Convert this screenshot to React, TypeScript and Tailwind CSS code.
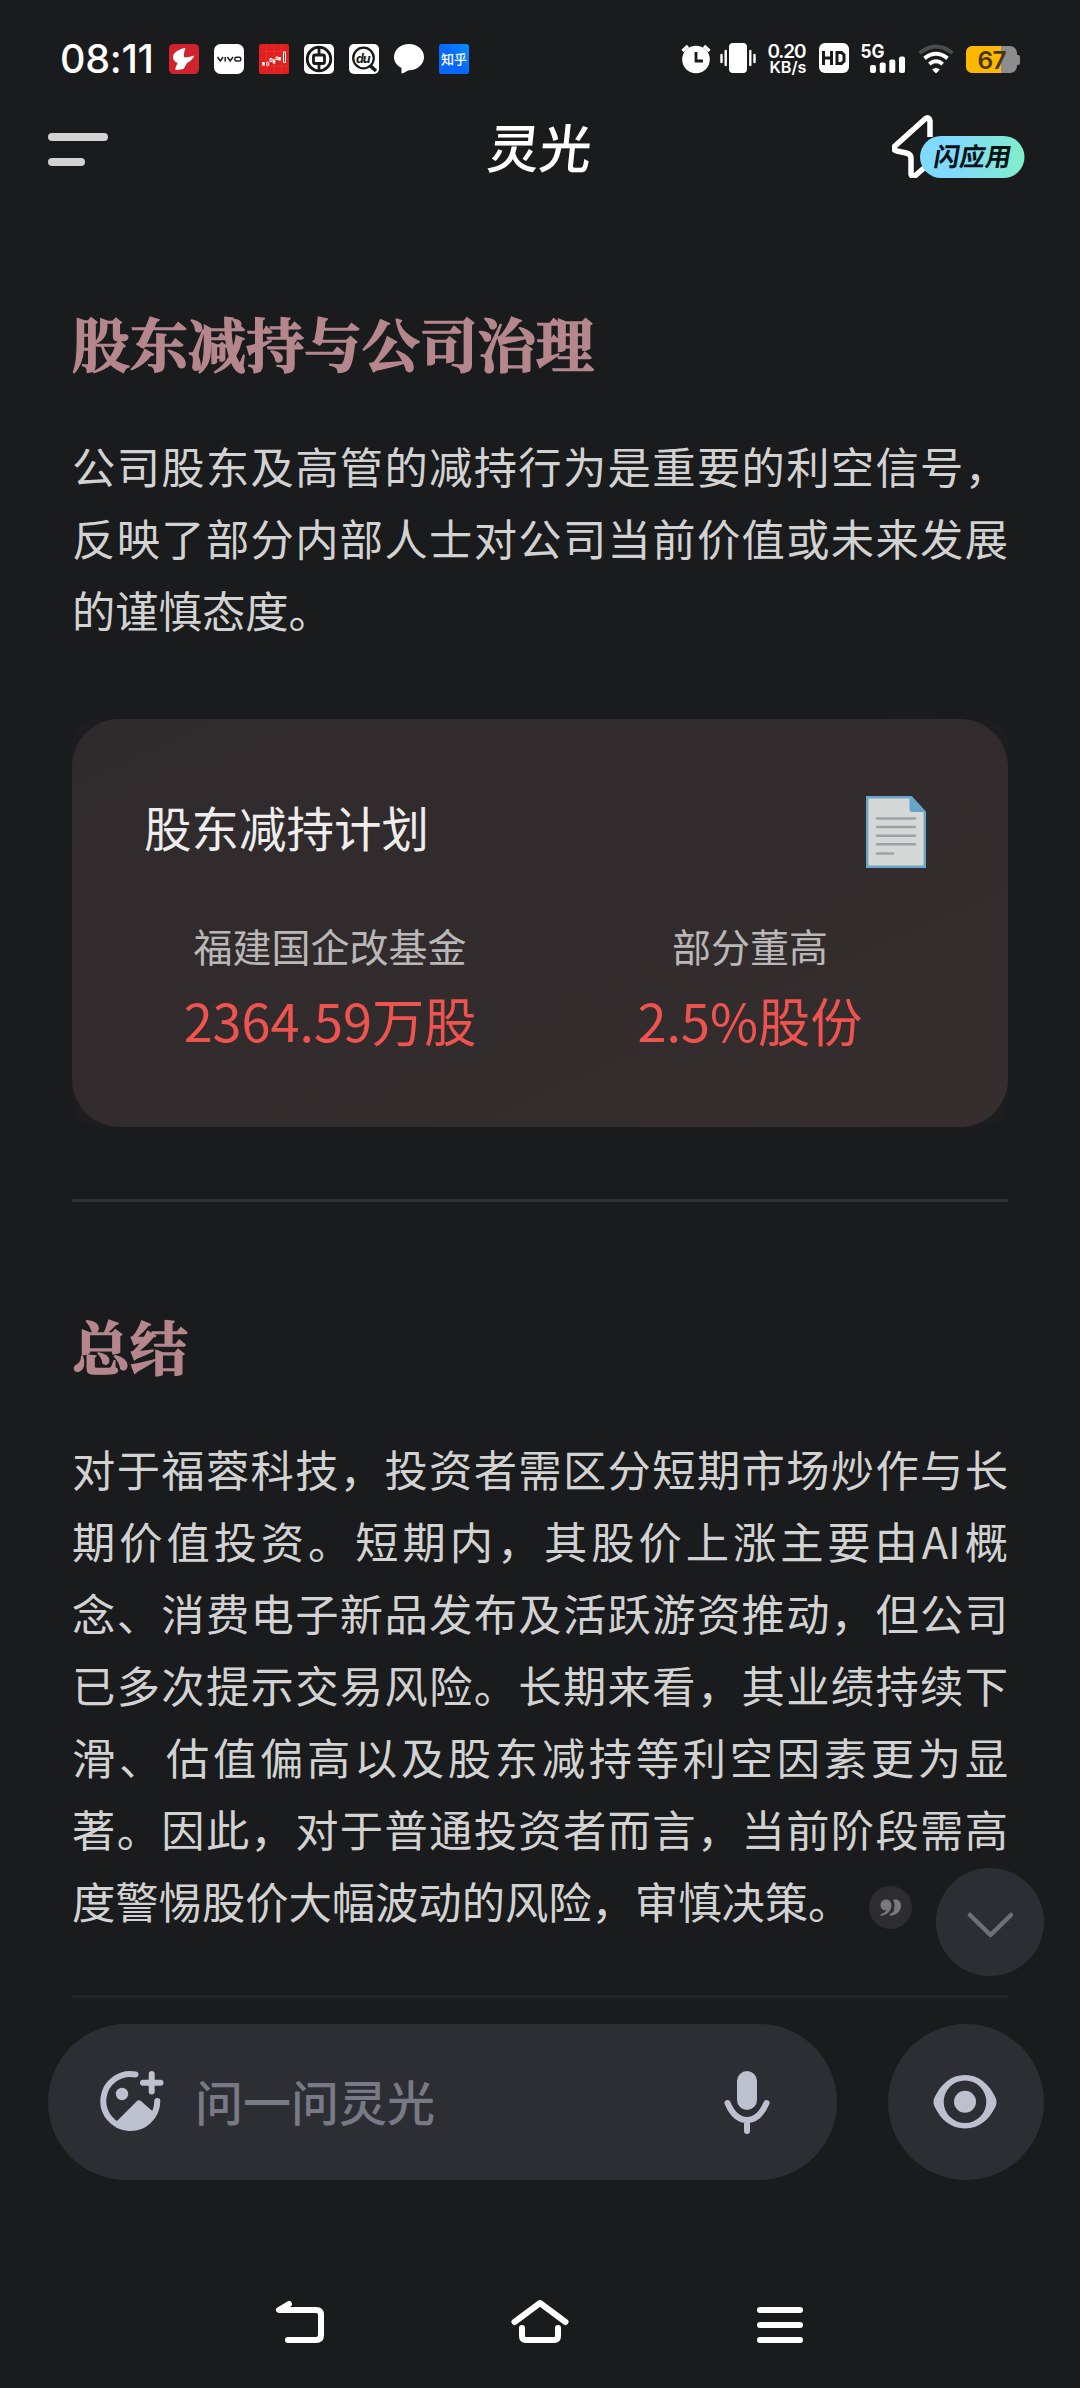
import React from 'react';

const sans = 'font-["Noto_Sans_CJK_SC",sans-serif]';

function Signals() {
  return (
    <svg className="block h-10 w-[360px]" viewBox="666 40 360 40" fill="white">
      <circle cx="696" cy="60.5" r="13.8" />
      <path d="M682.5 52l5.5-5M709.5 52l-5.5-5" stroke="white" strokeWidth="3.4" />
      <path d="M696 53v9h7" fill="none" stroke="#1a1b1c" strokeWidth="2.8" />
      <rect x="729" y="44" width="18" height="30" rx="4" />
      <path d="M721.5 56v7M725.7 52v14M750.3 52v14M754.5 56v7" stroke="white" strokeWidth="2.4" strokeLinecap="round" />
      <g fontFamily="Inter" fontWeight="600">
        <text x="767.5" y="58.5" fontSize="19" textLength="39">0.20</text>
        <text x="769.5" y="73.7" fontSize="16" textLength="37" lengthAdjust="spacingAndGlyphs">KB/s</text>
        <text x="860.5" y="58.5" fontSize="19" fontWeight="700" textLength="24" lengthAdjust="spacingAndGlyphs">5G</text>
      </g>
      <rect x="819" y="44" width="30" height="30" rx="6" />
      <path d="M823.5 52v14M831.5 52v14M823.5 59h8M837 53.4v11.2h4.5l2.5-2.5v-6.200l-2.500-2.500z" fill="none" stroke="#1a1b1c" strokeWidth="3" />
      <rect x="870" y="66" width="6" height="8" rx="2" />
      <rect x="879.700" y="63.500" width="6" height="10.500" rx="2" />
      <rect x="889.300" y="60.500" width="6" height="13.500" rx="2" />
      <rect x="899" y="57.500" width="6" height="16.500" rx="2" />
      <g fill="none" stroke="white" strokeWidth="4">
        <path d="M919.500 54q16.500-13 33 0" stroke="#4b4c4d" />
        <path d="M924.500 59.300q11.500-9 23 0M929.300 65q6.700-5.500 13.400 0" />
      </g>
      <path d="M932 70.500q4-3 8 0l-4 4z" />
      <path d="M1016 56h2q2 0 2 2v6q0 2-2 2h-2z" fill="#8d8d8e" />
      <rect x="966" y="47" width="51" height="27" rx="7" fill="#8d8d8e" />
      <path d="M1001 47h-28q-7 0-7 7v13q0 7 7 7h28z" fill="#ffb800" />
      <text x="977.500" y="69.700" fontSize="24.500" fontFamily="Inter" fontWeight="600" fill="#46360c" textLength="29">67</text>
    </svg>
  );
}

function AppIcons() {
  return (
    <svg className="block h-[30px] w-[300px]" viewBox="169 44 300 30">
      <defs>
        <linearGradient id="zh" x1="0" y1="1" x2="1" y2="0">
          <stop offset=".5" stopColor="#0668ff" />
          <stop offset="1" stopColor="#0a90ff" />
        </linearGradient>
      </defs>
      <rect x="169" y="44" width="30" height="30" rx="4.500" fill="#d0232d" />
      <path d="M185.500 48q-8 1-12 6.500-1.500 4 1.500 7l2.500 1.500-2 5q-1 2.500 1.500 2l6.500-1 3.500-6q4.500-2 7.500-7.500-6 1.800-10 2-1.500-3.500 1-9.500z" fill="#fff" />
      <rect x="214" y="44" width="30" height="30" rx="6.500" fill="#fff" />
      <path d="M217.500 57l2.800 4 2.800-4M225.200 57v4.500M227.400 57l2.800 4 2.800-4" fill="none" stroke="#222" strokeWidth="1.500" />
      <rect x="234.800" y="57.300" width="6" height="3.800" rx="1.600" fill="none" stroke="#222" strokeWidth="1.500" />
      <rect x="259" y="44" width="30" height="30" rx="2" fill="#e02020" />
      <path d="M259 51.500h30M259 59h30M259 66.500h30M266.500 44v30M274 44v30M281.500 44v30" stroke="#e8352f" strokeWidth=".6" />
      <path d="M263.500 62v3.500M274 59.500v4M279.500 57v3.500" stroke="#fff" strokeWidth="2.600" />
      <path d="M266.800 62.300h2v3h-2zM270 58.500h2v3h-2zM276 57h2v2.500h-2zM283.500 52h2v10.500h-2z" fill="none" stroke="#fff" strokeWidth="1" />
      <rect x="304" y="44" width="30" height="30" rx="5" fill="#fff" />
      <g fill="none" stroke="#17191a" strokeWidth="2.800">
        <circle cx="319" cy="59" r="11.800" />
        <rect x="313.500" y="55" width="11" height="8.500" rx="1.500" />
        <path d="M319 47v8M319 63.500v7.500" />
      </g>
      <rect x="349" y="44" width="30" height="30" rx="5" fill="#fff" />
      <circle cx="363.500" cy="58" r="10.300" fill="none" stroke="#17191a" strokeWidth="2.300" />
      <path d="M370 65.500l6 5.500" stroke="#17191a" strokeWidth="3.600" />
      <text x="356" y="62.500" fontFamily="Inter" fontSize="12.500" fontWeight="700" fontStyle="italic" fill="#17191a" textLength="14.500">du</text>
      <path d="M409 44c8.500 0 15 5.800 15 13s-6.500 13.300-15 13.300c-2.600 1-4.500 2.700-7.500 3.200v-5.400c-4.500-2.500-7.500-6-7.500-11 0-7.300 6.500-13.100 15-13.100z" fill="#fff" />
      <rect x="439" y="44" width="30" height="30" rx="2.500" fill="url(#zh)" />
      <text x="441" y="63.700" fontFamily="Noto Sans CJK SC" fontSize="13" fontWeight="500" fill="#fff">知乎</text>
    </svg>
  );
}

function FlashBadge() {
  return (
    <svg className="mb-2 block h-16 w-[134px]" viewBox="892 114 134 64">
      <defs>
        <linearGradient id="flash">
          <stop offset=".3" stopColor="#80d9ff" />
          <stop offset="1" stopColor="#81eec9" />
        </linearGradient>
      </defs>
      <path d="M930 137v-16q-1-5-5-2l-30 27q-3 4 2 5l9 2q5 1 5 5l0 16q1 4 5 1l8-7" fill="none" stroke="#fff" strokeWidth="5.500" strokeLinejoin="round" />
      <rect x="920" y="136" width="104.500" height="42" rx="21" fill="url(#flash)" />
      <text x="934" y="166" transform="translate(28 0) skewX(-10)" fontFamily="Noto Sans CJK SC" fontSize="25.500" fontWeight="700" fill="#061115" textLength="77">闪应用</text>
    </svg>
  );
}

function DocIcon() {
  return (
    <svg className="mt-[2px] block h-[72px] w-[60px]" viewBox="0 0 60 72">
      <path d="M1.200 1.200h44L58.800 16v54.800H1.200z" fill="#d6d7d7" stroke="#69a5c9" strokeWidth="2.400" />
      <path d="M43.500 1l15.500 15H46q-2.500 0-2.500-2.500z" fill="#65a5cc" />
      <path d="M11 22.500h38M11 31h38M11 39.700h38M11 48.300h38M11 57.500h16" stroke="#9ba3a7" strokeWidth="2.500" strokeLinecap="round" />
    </svg>
  );
}

function SectionTitle({ children }: { children: string }) {
  return (
    <h2 className='font-["Noto_Serif_CJK_SC","Noto_Sans_CJK_SC",serif] text-[58px] font-bold leading-[80px] text-[#b5878d] [-webkit-text-stroke:1.4px_#b5878d]'>
      {children}
    </h2>
  );
}

function Stat({ label, value }: { label: string; value: string }) {
  return (
    <div className="flex flex-col items-center whitespace-nowrap">
      <div className="text-[39px] leading-[60px] text-[#b9b7b7]">{label}</div>
      <div className="mt-[2px] text-[52.200px] leading-[84px] text-[#ef5350]">{value}</div>
    </div>
  );
}

export default function App() {
  return (
    <div className={`relative flex h-[2388px] w-[1080px] flex-col overflow-hidden bg-[#1a1b1c] text-[#d2d2d2] ${sans}`}>
      <header className="h-[210px] shrink-0">
        <div className="flex h-[118px] items-center pl-[60px] pr-[54px]">
          <div className="w-[109px] pt-px font-[Inter] text-[39.500px] font-medium leading-none tracking-[-0.300px] text-white">08:11</div>
          <AppIcons />
          <div className="ml-auto"><Signals /></div>
        </div>
        <div className="flex h-[64px] items-center justify-between pl-12 pr-[54px]">
          <div className="mb-px flex w-[134px] flex-col gap-[17px]">
            <div className="h-2 w-[60px] rounded-full bg-[#d2d2d2]" />
            <div className="h-2 w-[37px] rounded-full bg-[#d2d2d2]" />
          </div>
          <div className="mb-[8px] ml-[6px] -skew-x-6 text-[52px] font-medium leading-none text-white">灵光</div>
          <FlashBadge />
        </div>
      </header>

      <main className="px-[72px]">
        <div className="mt-[92px]">
          <SectionTitle>股东减持与公司治理</SectionTitle>
        </div>
        <p className="mt-[47px] text-justify text-[43.300px] leading-[72px]">公司股东及高管的减持行为是重要的利空信号，反映了部分内部人士对公司当前价值或未来发展的谨慎态度。</p>

        <section className="mt-[74px] rounded-[24px] bg-[#1d1d1f]">
          <div className="h-[408px] rounded-[48px] bg-linear-to-br from-[#2f2a2c] to-[#352d2e] px-[72px] pt-[72px]">
            <div className="flex h-[80px] items-center justify-between pr-[10px]">
              <div className="mb-[9px] text-[47.500px] leading-[71px] text-[#ededed]">股东减持计划</div>
              <DocIcon />
            </div>
            <div className="mt-[44px] grid grid-cols-2 gap-12">
              <Stat label="福建国企改基金" value="2364.59万股" />
              <Stat label="部分董高" value="2.5%股份" />
            </div>
          </div>
        </section>

        <hr className="mt-[72px] h-[3px] border-0 bg-[#303032]" />
        <div className="mt-[103px]">
          <SectionTitle>总结</SectionTitle>
        </div>
        <p className="mt-[47px] h-[504px] text-justify text-[43.300px] leading-[72px]">
          对于福蓉科技，投资者需区分短期市场炒作与长期价值投资。短期内，其股价上涨主要由AI概念、消费电子新品发布及活跃游资推动，但公司已多次提示交易风险。长期来看，其业绩持续下滑、估值偏高以及股东减持等利空因素更为显著。因此，对于普通投资者而言，当前阶段需高度警惕股价大幅波动的风险，审慎决策。
          <svg className="ml-[18px] inline-block size-[43px] align-[-10px]" viewBox="0 0 43 43">
            <circle cx="21.500" cy="21.500" r="21.500" fill="#2d2d30" />
            <path d="M17 13.500c3.500 0 5.500 2.500 5.500 6 0 5-4 9.500-10.500 10.300l-.5-1.500c3-.8 5-2 6-4-4 .5-6-2.200-6-5.200 0-3.200 2.500-5.600 5.500-5.600zM24 13.800c5-1.500 8 1.500 8 5.700 0 5.500-4 9.800-11 10.300l-.5-1.500c3.500-1.500 5-3.500 4.700-5.200 0-1 .3-2 .3-4 0-2-.5-3.500-1.500-5.300z" fill="#7a7a7a" />
          </svg>
        </p>
        <hr className="mt-[59px] h-[3px] border-0 bg-[#232325]" />
      </main>

      <div className="absolute left-[936px] top-[1868px] flex size-[108px] items-center justify-center rounded-full bg-[#2d2e33]">
        <svg className="mt-[6px] h-[26px] w-[46px]" viewBox="0 0 46 26" fill="none" stroke="#6f7074" strokeWidth="4.500" strokeLinecap="round" strokeLinejoin="round">
          <path d="M3 3l20.500 20L44 3" />
        </svg>
      </div>

      <div className="mt-[26px] flex gap-[51px] pl-12">
        <div className="flex h-[156px] w-[789px] items-center rounded-full bg-[#2d2e33] pl-[50px] pr-[66px]">
          <svg className="h-[64px] w-[66px]" viewBox="98 2070 66 64" fill="none" stroke="#bcc0cf" strokeWidth="6" strokeLinecap="round">
            <path d="M135.500 2074.500A27 27 0 1 0 157.300 2101" />
            <path d="M151.700 2074v17.500M143 2082.700h17.500" />
            <circle cx="122" cy="2094" r="6.200" fill="#bcc0cf" stroke="none" />
            <path d="M116 2122l20.500-20.500q2.500-2.300 5 0l12.500 11 2 1q-7 16-26 16-8.500 0-14-7.500z" fill="#bcc0cf" stroke="none" />
          </svg>
          <div className="mb-[5px] ml-[31px] text-[48px] font-medium leading-[72px] text-[#777984]">问一问灵光</div>
          <svg className="ml-auto h-[64px] w-[48px]" viewBox="723 2070 48 64" fill="none" stroke="#bcc0cf" strokeWidth="6" strokeLinecap="round">
            <rect x="737" y="2071" width="20" height="39" rx="10" fill="#bcc0cf" stroke="none" />
            <path d="M727.500 2103c4 9.500 10 17 19.500 17s15.500-7.500 19.500-17M747 2121v10" />
          </svg>
        </div>
        <div className="flex size-[156px] items-center justify-center rounded-full bg-[#2d2e33]">
          <svg className="mr-[2px] h-[54px] w-[64px]" viewBox="0 0 64 54">
            <path fillRule="evenodd" fill="#bcc0cf" d="M32 0c14 0 24 9 30.500 22.500q2 4.500 0 9C56 45 46 53.500 32 53.500S8 45 1.500 31.500q-2-4.500 0-9C8 9 18 0 32 0zM32 5.500a21.300 21.300 0 1 0 0 42.600 21.300 21.300 0 1 0 0-42.600z" />
            <circle cx="32" cy="26.800" r="11" fill="#bcc0cf" />
          </svg>
        </div>
      </div>

      <nav className="mt-[117px] flex h-[50px] items-center justify-between pl-[274px] pr-[276px]">
        <svg className="h-[50px] w-[52px]" viewBox="274 2297 52 50" fill="none" stroke="white" strokeWidth="6" strokeLinecap="round" strokeLinejoin="round">
          <path d="M289 2304l-10 6h37q5 0 5 5v20q0 5-5 5h-28" />
        </svg>
        <svg className="h-[50px] w-[60px]" viewBox="511 2297 60 50" fill="none" stroke="white" strokeWidth="6" strokeLinecap="round" strokeLinejoin="round">
          <path d="M514.500 2322l25.500-19 25.500 19M522 2328v8q0 4 4 4h28q4 0 4-4v-8" />
        </svg>
        <svg className="h-[50px] w-[48px]" viewBox="756 2297 48 50" stroke="white" strokeWidth="6" strokeLinecap="round">
          <path d="M760 2310h40M760 2325h40M760 2340h40" />
        </svg>
      </nav>
    </div>
  );
}
